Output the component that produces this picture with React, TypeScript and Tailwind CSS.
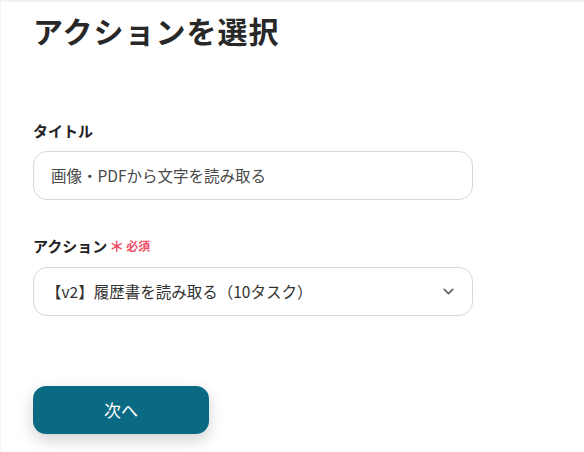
import { ChevronDown } from "lucide-react";

function App() {
  return (
    <div
      className="w-[584px] h-[452px] overflow-hidden bg-white border-t-2 border-t-[#f2f2f2] border-l border-l-[#f4f4f4] text-[#222]"
      style={{ fontFamily: '"Noto Sans CJK JP", "Noto Sans", sans-serif' }}
    >
      <div className="pl-[32px] pt-[4px]">
        <h1 className="text-[30px] font-bold leading-[48px] tracking-[1px] text-[#282828]">
          アクションを選択
        </h1>

        <div className="mt-[66px]">
          <label className="block text-[15px] font-bold leading-[22px] text-[#222]">
            タイトル
          </label>
          <div className="mt-[9px] w-[440px] h-[49px] rounded-[14px] border border-[#d5d8de] flex items-center pl-[17px] text-[15.5px] text-[#4a4a4a]">
            画像・PDFから文字を読み取る
          </div>
        </div>

        <div className="mt-[35px]">
          <label className="flex items-center text-[15px] font-bold leading-[22px] text-[#222]">
            アクション
            <span className="ml-[2px] text-[#ef4e68] text-[12px] font-bold flex items-center">
              <span className="text-[15px] font-bold mr-[2px]">＊</span>必須
            </span>
          </label>
          <div className="mt-[10px] w-[440px] h-[49px] rounded-[14px] border border-[#d5d8de] flex items-center justify-between pl-[12px] pr-[15px] text-[15.5px] text-[#333]">
            <span>【v2】履歴書を読み取る（10タスク）</span>
            <ChevronDown className="w-[17px] h-[17px] text-[#666]" strokeWidth={2.5} />
          </div>
        </div>

        <button className="mt-[70px] w-[176px] h-[48px] rounded-[13px] bg-[#0b6a83] text-white text-[17px] shadow-[0_6px_16px_rgba(0,0,0,0.18)]">
          次へ
        </button>
      </div>
    </div>
  );
}

export default App;
